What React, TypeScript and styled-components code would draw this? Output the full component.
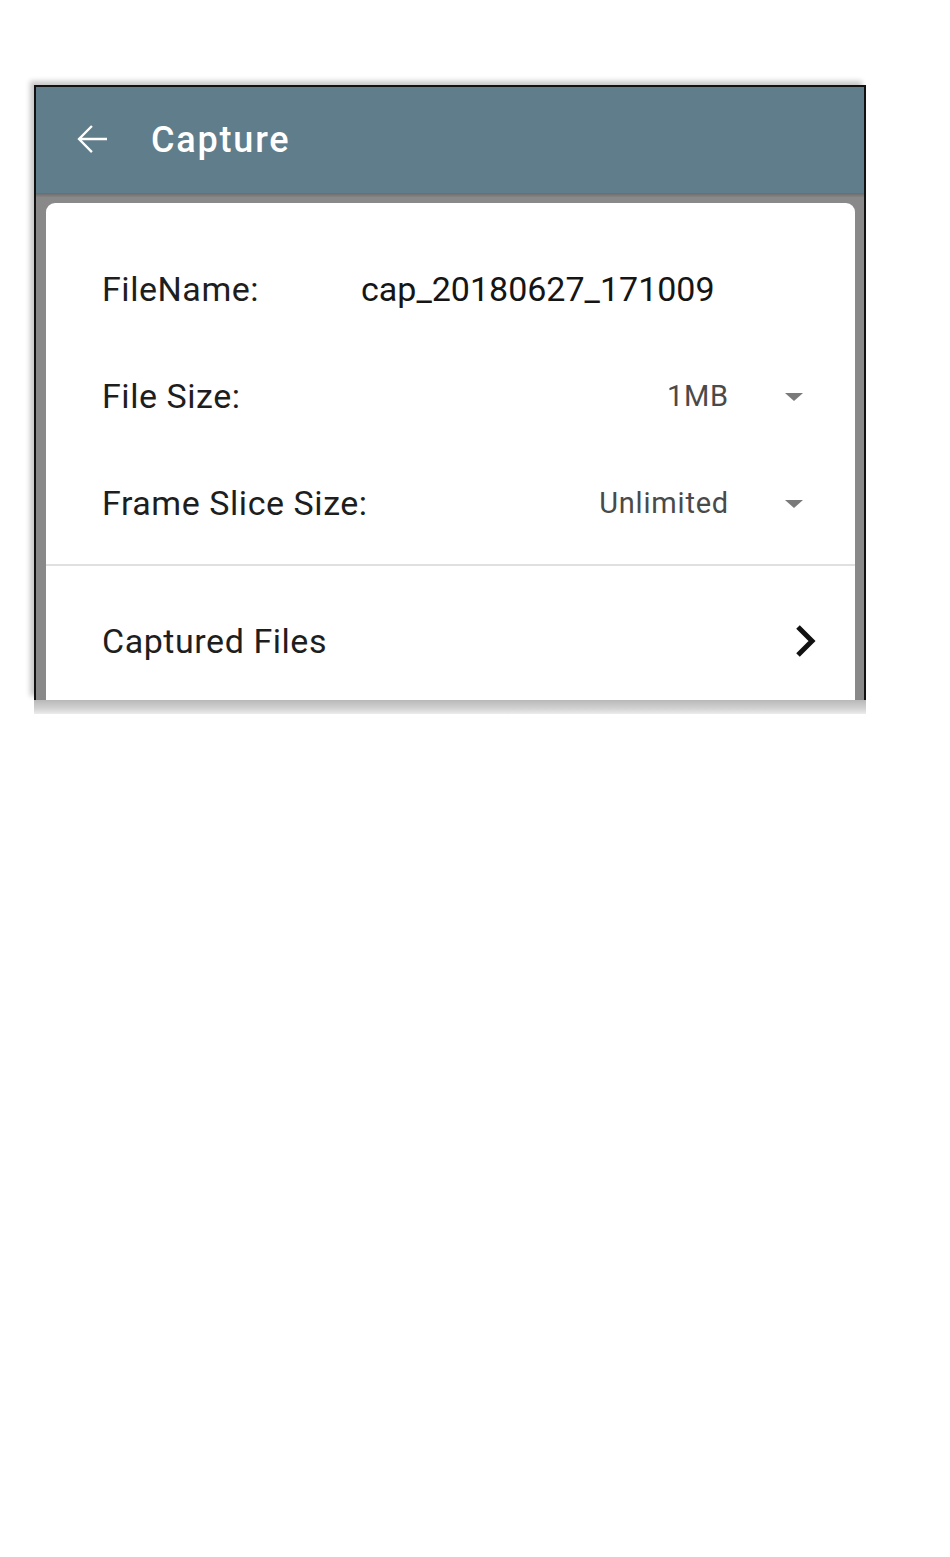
import React from 'react';
import styled, { createGlobalStyle } from 'styled-components';

const GlobalStyle = createGlobalStyle`
  html, body {
    margin: 0;
    padding: 0;
    background: #ffffff;
    font-family: Roboto, "Liberation Sans", Arial, sans-serif;
  }
`;

type Field = { label: string; value: string; dropdown?: boolean };

const fields: Field[] = [
  { label: 'FileName:', value: 'cap_20180627_171009' },
  { label: 'File Size:', value: '1MB', dropdown: true },
  { label: 'Frame Slice Size:', value: 'Unlimited', dropdown: true },
];

const App = () => {
  return (
    <Page>
      <GlobalStyle />
      <Frame>
        <AppBar>
          <BackButton aria-label="back">
            <svg width="30" height="30" viewBox="4 4 16 16" fill="#ffffff">
              <path d="M20 11.3H6.6l5.8-5.8-0.9-0.9L4.2 12l7.3 7.4 0.9-0.9-5.8-5.8H20z" />
            </svg>
          </BackButton>
          <Title>Capture</Title>
        </AppBar>
        <BarShadow />
        <Body>
          <Card>
            <FieldList>
              {fields.map((f) => (
                <FieldRow key={f.label} $select={!!f.dropdown}>
                  <Label>{f.label}</Label>
                  <Value $select={!!f.dropdown}>{f.value}</Value>
                  {f.dropdown && <Caret />}
                </FieldRow>
              ))}
            </FieldList>
            <Divider />
            <LinkRow>
              <Label>Captured Files</Label>
              <svg width="22" height="34" viewBox="0 0 22 34">
                <polyline
                  points="3,3 17,17 3,31"
                  fill="none"
                  stroke="#111111"
                  strokeWidth="5"
                  strokeLinejoin="miter"
                />
              </svg>
            </LinkRow>
          </Card>
        </Body>
      </Frame>
      <BottomEdge />
    </Page>
  );
};

const Page = styled.div`
  padding: 85px 0 0 34px;
`;

const Frame = styled.div`
  width: 828px;
  border: 2px solid #111111;
  border-bottom: none;
  box-shadow: -4px -4px 5px rgba(0, 0, 0, 0.22);
  display: flex;
  flex-direction: column;
`;

const AppBar = styled.div`
  height: 106px;
  background-color: #607d8b;
  display: flex;
  align-items: center;
  padding-left: 41px;
`;

const BackButton = styled.div`
  display: flex;
  width: 30px;
  height: 30px;
  margin-top: -2px;
`;

const Title = styled.h1`
  margin: 0 0 0 44px;
  color: #ffffff;
  font-size: 36px;
  font-weight: 500;
  letter-spacing: 1.8px;
`;

const BarShadow = styled.div`
  height: 4px;
  background: linear-gradient(#6b6b6b, #858585);
`;

const Body = styled.div`
  height: 503px;
  box-sizing: border-box;
  overflow: hidden;
  background-color: #898989;
  padding: 6px 9px 0 10px;
`;

const Card = styled.div`
  background: #ffffff;
  border-radius: 9px 9px 0 0;
  padding-top: 32px;
  height: 100%;
  box-sizing: border-box;
`;

const FieldList = styled.div`
  display: flex;
  flex-direction: column;
`;

const FieldRow = styled.div<{ $select: boolean }>`
  height: 107px;
  display: grid;
  grid-template-columns: ${(p) => (p.$select ? '1fr auto 18px' : '259px 1fr')};
  align-items: center;
  padding: 0 52px 0 56px;
`;

const Label = styled.span`
  font-size: 34px;
  letter-spacing: 0.55px;
  color: #1e1e1e;
`;

const Value = styled.span<{ $select: boolean }>`
  font-size: ${(p) => (p.$select ? '29px' : '34px')};
  letter-spacing: ${(p) => (p.$select ? '0.8px' : '0')};
  color: ${(p) => (p.$select ? '#4a4a4a' : '#151515')};
  margin-right: ${(p) => (p.$select ? '56px' : '0')};
`;

const Caret = styled.span`
  width: 0;
  height: 0;
  border-left: 9px solid transparent;
  border-right: 9px solid transparent;
  border-top: 8px solid #7a7a7a;
  margin-top: 2px;
`;

const Divider = styled.div`
  height: 2px;
  background: #e0e0e0;
  margin-top: 8px;
`;

const LinkRow = styled.div`
  height: 150px;
  display: flex;
  align-items: center;
  justify-content: space-between;
  padding: 0 38px 0 56px;
`;

const BottomEdge = styled.div`
  width: 832px;
  height: 14px;
  background: linear-gradient(#b8b8b8, #d2d2d2 60%, #ececec);
`;

export default App;
